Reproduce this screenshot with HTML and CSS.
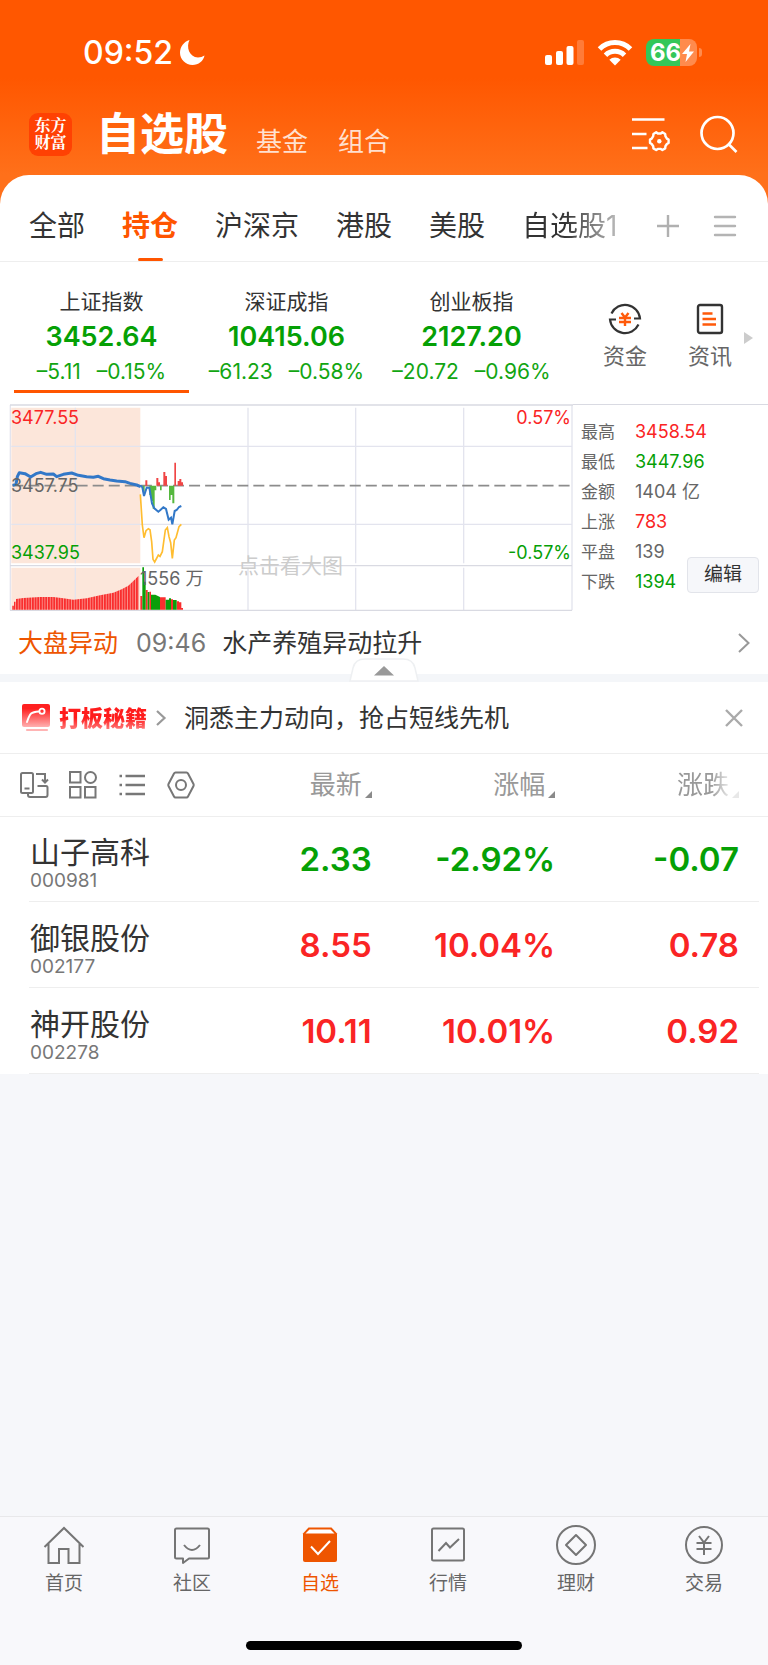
FILE: index.html
```html
<!DOCTYPE html>
<html lang="zh-CN">
<head>
<meta charset="utf-8">
<meta name="viewport" content="width=device-width, initial-scale=1">
<title>自选股</title>
<link rel="stylesheet" href="styles.css">
</head>
<body>
<header class="top">
  <div class="status">
    <div class="status-left">
      <span class="clock">09:52</span>
      <svg class="moon" viewBox="0 0 25 25" width="25" height="25"><path fill="#fff" d="M9.500 0C6 7 9 17 18 17.500C20.500 17.500 22.500 16.500 24.500 15.500C23.500 21 18.500 25 12.500 25C5.500 25 0 19.500 0 12.800C0 7 4 1.500 9.500 0Z"/></svg>
    </div>
    <div class="status-right">
      <svg viewBox="0 0 39 26" width="39" height="26" fill="#fff"><rect x="0" y="15" width="7" height="10" rx="2"/><rect x="11" y="11" width="7" height="14" rx="2"/><rect x="21.500" y="6" width="7" height="19" rx="2"/><rect x="32" y="0" width="7" height="25" rx="2" opacity=".22"/></svg>
      <svg viewBox="0 0 36 26" width="36" height="26"><g fill="none" stroke="#fff" stroke-width="5"><path d="M2.500 9A22 22 0 0 1 33.500 9"/><path d="M8.500 15.200A13.500 13.500 0 0 1 27.500 15.200"/></g><path fill="#fff" d="M18 25.500L12.300 19.800A8.200 8.200 0 0 1 23.700 19.800Z"/></svg>
      <div class="battery">
        <span class="battery-body"><span class="battery-text">66</span><svg viewBox="0 0 12 18" width="12" height="18"><path fill="#fff" d="M8.500 0L0 10H5L3.500 18L12 7.500H7Z"/></svg></span>
        <span class="battery-nub"></span>
      </div>
    </div>
  </div>
  <div class="bar">
    <div class="logo"><span>东方</span><span>财富</span></div>
    <h1 class="title">自选股</h1>
    <nav class="heads"><a href="#fund">基金</a><a href="#group">组合</a></nav>
    <div class="bar-actions">
      <button class="plain" aria-label="设置"><svg viewBox="0 0 38 36" width="38" height="36" fill="none" stroke="#fff" stroke-width="2.600"><path d="M0 3.500H32.500M0 18H14.500M0 32H15.500"/><path stroke-width="2.400" stroke-linejoin="round" d="M24.200 16.300L25.800 17.500H28.800L30.400 16.300L33.200 18L33.400 20.200L34.900 22.600L36.600 23.600V27L34.900 28L33.400 30.200L33.200 32.400L30.400 34L28.800 32.900H25.800L24.200 34L21.400 32.400L21.200 30.200L19.700 28L18 27V23.600L19.700 22.600L21.200 20.200L21.400 18Z"/><circle cx="27.300" cy="25.200" r="2.200" fill="#fff" stroke="none"/></svg></button>
      <button class="plain" aria-label="搜索"><svg viewBox="0 0 38 38" width="38" height="38" fill="none" stroke="#fff" stroke-width="2.700"><circle cx="17.500" cy="18" r="16"/><path d="M28.500 29L36.500 37"/></svg></button>
    </div>
  </div>
</header>

<main class="panel">
  <nav class="tabs">
    <div class="tab-list">
      <a href="#all">全部</a><a href="#hold" class="active">持仓</a><a href="#hsj">沪深京</a><a href="#hk">港股</a><a href="#us">美股</a><a href="#own" class="fading">自选股1</a>
    </div>
    <div class="tab-actions">
      <button class="plain" aria-label="添加"><svg viewBox="0 0 24 24" width="24" height="24" stroke="#b0b0b0" stroke-width="2.400"><path d="M1 12H23M12 1V23"/></svg></button>
      <button class="plain" aria-label="菜单"><svg viewBox="0 0 24 24" width="24" height="24" stroke="#b4b4b4" stroke-width="2.400" stroke-linecap="round"><path d="M2 3H22M2 12H22M2 21H22"/></svg></button>
    </div>
  </nav>

  <section class="indices">
    <div class="index active"><span class="index-name">上证指数</span><strong>3452.64</strong><span class="change"><span>–5.11</span><span>–0.15%</span></span></div>
    <div class="index"><span class="index-name">深证成指</span><strong>10415.06</strong><span class="change"><span>–61.23</span><span>–0.58%</span></span></div>
    <div class="index"><span class="index-name">创业板指</span><strong>2127.20</strong><span class="change"><span>–20.72</span><span>–0.96%</span></span></div>
    <div class="shortcuts">
      <a href="#money"><svg viewBox="0 0 32 32" width="32" height="32" fill="none" stroke="#333" stroke-width="2.200"><path d="M2.500 10.500A15 15 0 0 1 31 15.500H25"/><path d="M29.500 21.500A15 15 0 0 1 1 16.500H7"/><path stroke="#ff5a0a" stroke-width="2.400" d="M12.500 10L16 14.500L19.500 10M10 15H22M10 19H22M16 14.500V23"/></svg>资金</a>
      <a href="#news"><svg viewBox="0 0 28 32" width="28" height="32" fill="none" stroke="#333" stroke-width="2.400"><rect x="2" y="2" width="24" height="28" rx="2"/><path stroke="#ff5a0a" stroke-width="2.600" d="M6.500 10.500H16.500M6.500 16H20M6.500 21.500H20"/></svg>资讯</a>
      <svg class="more" viewBox="0 0 9 12" width="9" height="12"><path fill="#ccc" d="M0 0L9 6L0 12Z"/></svg>
    </div>
  </section>

  <section class="market">
    <div class="chart">
      <svg viewBox="30 27 1689 621" class="plot" aria-hidden="true">
        <defs><pattern id="bars" width="8" height="10" patternUnits="userSpaceOnUse"><rect width="8" height="10" fill="#fbb3ab"/><rect width="6" height="10" fill="#f92e2e"/></pattern></defs>
        <path fill="#fce6da" d="M34 38H421V505H34ZM34 518H421V645H34Z"/>
        <path fill="none" stroke="#e3e4ee" stroke-width="4" d="M31 30V646M226 38V505M744 38V505M1067 38V505M1391 38V505M226 518V645M744 518V645M1067 518V645M1391 518V645M1716 30V646M34 154H1716M34 388H1716"/>
        <path fill="none" stroke="#d9dae2" stroke-width="4" d="M30 30H1719M30 512H1716M30 646H1716"/>
        <path fill="none" stroke="#8c8c8c" stroke-width="5" stroke-dasharray="33 15.200" d="M37 272H1710"/>
        <path fill="url(#bars)" d="M36 644V632H42V620H48V612L70 609L120 606L160 606L190 610L220 614L260 610L300 601L340 593L365 583L385 572L400 558L416 542V644Z"/>
        <path fill="#f92e2e" d="M421 603H427V644H421ZM437 585H443V644H437ZM448 590H453V644H448ZM480 607H497V644H480ZM513 613H519V644H513ZM530 619H537V644H530ZM537 622H544V644H537ZM544 639H549V644H544Z"/>
        <path fill="#0a9f0a" d="M427 517H432V644H427ZM432 560H437V644H432ZM443 591H448V644H443ZM453 599H466L480 606V644H453ZM497 614H507V610H513V644H497ZM519 615H530V644H519Z"/>
        <path fill="#f04545" d="M436 256H442V272H436ZM469 249H475V272H469ZM475 262H480V272H475ZM490 231H496V272H490ZM496 243H501V272H496ZM523 203H528V272H523ZM533 258H538V272H533ZM538 252H544V272H538ZM544 262H549V272H544Z"/>
        <path fill="#55b83e" d="M428 272H434V290H428ZM448 272H453V300H448ZM453 272H458V318H453ZM458 272H464V341H458ZM464 272H469V286H464ZM480 272H485V286H480ZM507 272H512V315H507ZM512 272H517V300H512ZM517 272H523V325H517Z"/>
        <path fill="none" stroke="#ffbd30" stroke-width="5" d="M421 298L427 390L432 428L438 407L445 401L450 404L455 440L459 493L464 501L475 480L480 484L487 470L496 405L502 398L507 425L512 443L517 490L523 435L528 428L537 395L544 388"/>
        <path fill="none" stroke="#3278c8" stroke-width="9" stroke-linejoin="round" d="M38 271L48 268L52 245L58 233L75 236L92 246L108 236L122 232L140 238L160 237L170 245L190 238L215 234L235 241L260 245L280 247L295 244L310 251L330 255L350 258L375 260L390 265L410 270L422 275"/>
        <path fill="none" stroke="#3278c8" stroke-width="6" d="M422 272L427 277L432 303L440 278L448 278L456 325L463 340L475 350L482 344L490 337L498 342L506 374L513 368L517 388L524 348L530 345L537 336L544 333"/>
      </svg>
      <span class="mark high red">3477.55</span>
      <span class="mark mid">3457.75</span>
      <span class="mark low green">3437.95</span>
      <span class="mark high right red">0.57%</span>
      <span class="mark low right green">-0.57%</span>
      <span class="mark volume">1556 万</span>
      <span class="hint">点击看大图</span>
    </div>
    <div class="stats">
      <dl>
        <dt>最高</dt><dd class="red">3458.54</dd>
        <dt>最低</dt><dd class="green">3447.96</dd>
        <dt>金额</dt><dd>1404 亿</dd>
        <dt>上涨</dt><dd class="red">783</dd>
        <dt>平盘</dt><dd>139</dd>
        <dt>下跌</dt><dd class="green">1394</dd>
      </dl>
      <button class="edit">编辑</button>
    </div>
  </section>

  <a class="alert" href="#alert">
    <span class="alert-tag">大盘异动</span><time>09:46</time><span class="alert-text">水产养殖异动拉升</span>
    <svg viewBox="0 0 12 20" width="12" height="20" fill="none" stroke="#999" stroke-width="2"><path d="M1 1L10.500 10L1 19"/></svg>
  </a>
  <div class="divider">
    <button class="fold" aria-label="收起"><svg viewBox="0 0 70 24" width="70" height="24"><path fill="#fff" stroke="#eef0f2" stroke-width="1.500" d="M1 23L4 10Q6 1 16 1H54Q64 1 66 10L69 23Z"/><path fill="#999" d="M25 17.500L35 8L45 17.500Z"/></svg></button>
  </div>

  <section class="promo">
    <svg viewBox="0 0 30 28" width="30" height="28"><defs><linearGradient id="fade" x1="0" y1="0" x2="0" y2="1"><stop offset=".2" stop-color="#ff2020"/><stop offset="1" stop-color="#ffb0b0"/></linearGradient></defs><rect x="1" y="0" width="28" height="23" rx="2" fill="url(#fade)"/><path stroke="#ffb4b4" stroke-width="2.200" stroke-linecap="round" d="M6 26H26"/><path fill="none" stroke="#fff" stroke-width="2" stroke-linecap="round" d="M6 18C9 9 10 8 18 7.500"/><circle cx="21" cy="7.200" r="2.600" fill="none" stroke="#fff" stroke-width="1.800"/></svg>
    <b class="promo-tag">打板秘籍</b>
    <svg viewBox="0 0 10 16" width="10" height="16" fill="none" stroke="#999" stroke-width="2.200"><path d="M1 1L8.500 8L1 15"/></svg>
    <span class="promo-text">洞悉主力动向，抢占短线先机</span>
    <button class="plain close" aria-label="关闭"><svg viewBox="0 0 18 18" width="18" height="18" stroke="#aaa" stroke-width="2.400"><path d="M1 1L17 17M17 1L1 17"/></svg></button>
  </section>

  <table class="stocks">
    <thead>
      <tr>
        <th class="tools-cell"><div class="tools">
          <button class="plain" aria-label="横屏"><svg viewBox="0 0 28 28" width="28" height="28"><rect x="1" y="2" width="12" height="20" rx="1.500"/><path d="M4.500 17.500H9.500M16 3H25V11M22 8.500L25 11.500L28 8.500M17.500 15H26Q27.500 15 27.500 16.500V24Q27.500 26 25.500 26H10Q8 26 8 24V22.500"/></svg></button>
          <button class="plain" aria-label="宫格"><svg viewBox="0 0 28 28" width="28" height="28"><rect x="1" y="1" width="10.500" height="10.500"/><circle cx="21.500" cy="6.500" r="5.500"/><rect x="1" y="16" width="10.500" height="10.500"/><rect x="16" y="16" width="10.500" height="10.500"/></svg></button>
          <button class="plain" aria-label="列表"><svg viewBox="0 0 28 28" width="28" height="28"><path stroke-width="2.600" d="M7.500 5H27M7.500 14H27M7.500 23H27M1.500 5H4M1.500 14H4M1.500 23H4"/></svg></button>
          <button class="plain" aria-label="设置"><svg viewBox="0 0 28 28" width="28" height="28"><path stroke-linejoin="round" d="M8.500 1.500H19.500Q20.500 1.500 21 2.500L26.500 13Q27 14 26.500 15L21 25.500Q20.500 26.500 19.500 26.500H8.500Q7.500 26.500 7 25.500L1.500 15Q1 14 1.500 13L7 2.500Q7.500 1.500 8.500 1.500Z"/><circle cx="14" cy="14" r="5"/></svg></button>
        </div></th>
        <th><span class="sort">最新</span></th>
        <th><span class="sort">涨幅</span></th>
        <th><span class="sort fading">涨跌</span></th>
      </tr>
    </thead>
    <tbody>
      <tr class="green"><td><span class="name">山子高科</span><span class="code">000981</span></td><td>2.33</td><td>-2.92%</td><td>-0.07</td></tr>
      <tr class="red"><td><span class="name">御银股份</span><span class="code">002177</span></td><td>8.55</td><td>10.04%</td><td>0.78</td></tr>
      <tr class="red"><td><span class="name">神开股份</span><span class="code">002278</span></td><td>10.11</td><td>10.01%</td><td>0.92</td></tr>
    </tbody>
  </table>
</main>

<footer class="bottom">
  <nav class="dock">
    <a href="#home"><svg viewBox="0 0 40 40" width="40" height="40"><path d="M.5 21L20 2L39.500 21M4.500 17.500V37H15V23H24.500V37H35.500V17.500"/></svg>首页</a>
    <a href="#community"><svg viewBox="0 0 40 40" width="40" height="40"><path stroke-linejoin="round" d="M4.500 2.500H35.500Q37 2.500 37 4V31Q37 32.500 35.500 32.500H17L11 37V32.500H4.500Q3 32.500 3 31V4Q3 2.500 4.500 2.500Z"/><path stroke-width="2" d="M12 19Q20 29 28 19"/></svg>社区</a>
    <a href="#picks" class="active"><svg viewBox="0 0 40 40" width="40" height="40"><path fill="#ee5500" stroke="none" d="M8.500 1.500H31.500L37 7.500V34Q37 36 35 36H5Q3 36 3 34V7.500Z"/><path fill="#fff" stroke="none" d="M9.500 3.500H30.500L34.500 7.500H5.500Z"/><path stroke="#fff" stroke-width="2" d="M11 20.500L18 28L30 15"/></svg>自选</a>
    <a href="#quotes"><svg viewBox="0 0 40 40" width="40" height="40"><rect x="4" y="2.500" width="32" height="32" rx="1.500"/><path stroke-width="2" d="M10.500 25L18 17L22 21.500L31 13"/></svg>行情</a>
    <a href="#wealth"><svg viewBox="0 0 40 40" width="40" height="40"><circle cx="20" cy="19" r="19"/><path stroke-linejoin="round" d="M20 9L30 19L20 29L10 19Z"/></svg>理财</a>
    <a href="#trade"><svg viewBox="0 0 40 40" width="40" height="40"><circle cx="20" cy="19" r="18"/><path stroke-width="2" d="M15 10L20 16.500L25 10M12.500 17H27.500M12.500 23H27.500M20 16.500V29"/></svg>交易</a>
  </nav>
  <div class="home-indicator"></div>
</footer>
</body>
</html>
```
FILE: styles.css
```css
* { box-sizing: border-box; }
body {
  margin: 0;
  min-height: 100vh;
  display: flex;
  flex-direction: column;
  background: #f6f7fa;
  color: #333;
  font-family: Inter, "Noto Sans CJK SC", sans-serif;
}
a { color: inherit; text-decoration: none; }
svg { display: block; flex: none; overflow: visible; }
.plain { padding: 0; border: 0; background: none; }
.red { color: #fa2424; }
.green { color: #05a005; }

.top {
  height: 204px;
  padding-top: 30px;
  background: linear-gradient(#ff5700 0, #ff5700 78px, #ff701a 175px);
  color: #fff;
}
.status {
  display: flex;
  justify-content: space-between;
  align-items: center;
  height: 45px;
  padding: 0 66px 0 83px;
}
.status-left, .status-right { display: flex; align-items: center; }
.status-left { gap: 7px; }
.status-right { gap: 13px; }
.clock { font-size: 32px; font-weight: 500; }
.battery { display: flex; align-items: center; gap: 2px; }
.battery-body {
  display: flex;
  align-items: center;
  gap: 1px;
  width: 51px;
  height: 27px;
  padding-left: 4px;
  border-radius: 8px;
  background: linear-gradient(90deg, #34c759 66%, #ff8b4d 66%);
}
.battery-text { font-size: 24px; font-weight: 700; line-height: 27px; }
.battery-nub { width: 3px; height: 9px; border-radius: 0 4px 4px 0; background: #ff8b4d; }

.bar { display: flex; align-items: center; height: 60px; margin-top: 29px; padding: 0 30px 0 29px; }
.logo {
  display: flex;
  flex-direction: column;
  align-items: center;
  justify-content: center;
  width: 43px;
  height: 43px;
  border-radius: 9px;
  background: #ff4103;
  font-family: "Liberation Serif", "Noto Serif CJK SC", "Noto Sans CJK SC", serif;
  font-size: 16px;
  font-weight: 700;
  line-height: 17px;
}
.title { margin: 0 0 0 24px; font-size: 44px; font-weight: 700; line-height: 60px; }
.heads { display: flex; gap: 30px; margin: 16px 0 0 28px; font-size: 26px; line-height: 40px; color: #ffe0cf; }
.bar-actions { display: flex; align-items: center; gap: 30px; margin-left: auto; }

.panel { position: relative; margin-top: -29px; border-radius: 29px 29px 0 0; background: #fff; }
.tabs {
  display: flex;
  justify-content: space-between;
  height: 87px;
  padding: 0 31px 0 29px;
  border-bottom: 1px solid #eee;
}
.tab-list { display: flex; gap: 37px; font-size: 28px; line-height: 102px; }
.tab-list a { position: relative; white-space: nowrap; }
.tab-list .active { color: #ff5500; font-weight: 700; }
.tab-list .active::after {
  content: "";
  position: absolute;
  left: 50%;
  top: 83px;
  width: 25px;
  height: 3px;
  margin-left: -12px;
  border-radius: 2px;
  background: #ff5500;
}
.tab-list .fading {
  height: 86px;
  background: linear-gradient(90deg, #333 45%, #bbb);
  background-clip: text;
  color: transparent;
}
.tab-actions { display: flex; align-items: center; gap: 33px; padding-top: 15px; }

.indices { display: grid; grid-template-columns: 175fr 175fr 175fr 190fr; column-gap: 10px; padding: 0 9px 0 14px; }
.index { display: flex; flex-direction: column; align-items: center; height: 131px; padding-top: 24px; }
.index.active { border-bottom: 3px solid #ff5500; }
.index-name { font-size: 21px; line-height: 32px; }
.index strong { color: #05a005; font-size: 27px; font-weight: 600; line-height: 38px; }
.change { display: flex; gap: 16px; color: #12a512; font-size: 21px; line-height: 32px; white-space: nowrap; }
.shortcuts { display: flex; align-items: center; gap: 41px; padding: 20px 0 0 34px; color: #666; font-size: 22px; line-height: 34px; white-space: nowrap; }
.shortcuts a { display: flex; flex-direction: column; align-items: center; gap: 4px; }
.shortcuts .more { margin-left: -29px; }

.market { display: flex; margin-top: 11px; padding-left: 10px; }
.chart { position: relative; flex: 0 1 563px; }
.plot { width: 100%; height: auto; }
.mark { position: absolute; left: 1px; color: #666; font-size: 18px; line-height: 20px; }
.mark.high { top: 4px; }
.mark.mid { top: 72px; }
.mark.low { top: 139px; }
.mark.right { left: auto; right: 2px; }
.mark.volume { left: 130px; top: 165px; }
.mark.red { color: #fa2424; }
.mark.green { color: #05a005; }
.hint { position: absolute; left: 228px; top: 147px; color: #ccc; font-size: 21px; line-height: 30px; }
.stats { position: relative; flex: 1; border-top: 1px solid #d9dae2; padding: 12px 9px 0 8px; }
.stats dl { display: grid; grid-template-columns: 34px 1fr; column-gap: 20px; margin: 0; color: #666; font-size: 18px; line-height: 30px; white-space: nowrap; }
.stats dt { font-size: 17px; }
.stats dd { margin: 0; }
.edit {
  position: absolute;
  right: 9px;
  top: 152px;
  width: 72px;
  height: 36px;
  padding: 0;
  border: 1px solid #e2e4ea;
  border-radius: 4px;
  background: #f6f7fa;
  color: #333;
  font: 19px/34px Inter, "Noto Sans CJK SC", sans-serif;
}

.alert { display: flex; align-items: center; height: 63px; padding: 0 18px; font-size: 25px; line-height: 36px; }
.alert-tag { color: #ee5500; }
.alert time { margin: 0 16px 0 18px; color: #777; }
.alert svg { margin-left: auto; }
.divider { position: relative; height: 8px; background: #f4f6f9; }
.fold { position: absolute; left: 50%; bottom: 0; padding: 0; border: 0; background: none; transform: translateX(-50%); }

.promo { display: flex; align-items: center; height: 72px; padding: 0 25px 0 21px; border-bottom: 1px solid #eee; font-size: 25px; line-height: 36px; }
.promo-tag {
  margin: 0 9px 0 8px;
  background: linear-gradient(#ff1c1c 50%, #ffa0a0);
  background-clip: text;
  color: transparent;
  font-size: 22px;
  font-weight: 900;
  line-height: 32px;
}
.promo-text { margin-left: 18px; }
.close { margin-left: auto; }

.stocks { width: 100%; border-collapse: collapse; table-layout: fixed; }
.stocks th { height: 62px; padding: 0; border-bottom: 1px solid #eee; text-align: right; font-weight: 400; }
.stocks th:first-child { width: 26%; }
.stocks th:nth-child(2) { width: 22.4%; }
.stocks th:nth-child(3) { width: 23.9%; }
.tools { display: flex; gap: 21px; padding-left: 20px; }
.tools svg { fill: none; stroke: #777; stroke-width: 2; }
.sort { display: inline-flex; align-items: center; gap: 3px; color: #999; font-size: 26px; line-height: 42px; white-space: nowrap; vertical-align: middle; }
.sort::after { content: ""; margin-top: 20px; border: solid transparent; border-width: 7px 0 0 7px; border-right: 7px solid #8a8a8a; border-left-width: 0; border-bottom: 0; }
.sort.fading { mask-image: linear-gradient(90deg, #000 55%, rgba(0, 0, 0, .2) 85%); }
.stocks td {
  height: 86px;
  padding: 0;
  background: linear-gradient(#eee, #eee) 0 100% / 100% 1px no-repeat;
  text-align: right;
  font-size: 33px;
  font-weight: 600;
}
.stocks td:first-child { padding-left: 30px; background-position: 29px 100%; text-align: left; }
.stocks th:last-child, .stocks td:last-child { padding-right: 29px; }
.stocks td:last-child { background-size: calc(100% - 9px) 1px; }
.name, .code { display: block; font-weight: 400; }
.name { padding-top: 8px; color: #333; font-size: 30px; line-height: 36px; }
.code { color: #777; font-size: 19px; line-height: 22px; }

.bottom { display: flex; flex-direction: column; align-items: center; margin-top: auto; border-top: 1px solid #e8e8ea; background: #f8f8fb; }
.dock { display: grid; grid-template-columns: repeat(6, 1fr); width: 100%; padding-top: 9px; }
.dock a { display: flex; flex-direction: column; align-items: center; gap: 3px; color: #666; font-size: 19px; line-height: 30px; }
.dock svg { fill: none; stroke: #757575; stroke-width: 2; }
.dock .active { color: #ee5500; }
.home-indicator { width: 36%; height: 9px; margin: 42px 0 15px; border-radius: 5px; background: #000; }
```
